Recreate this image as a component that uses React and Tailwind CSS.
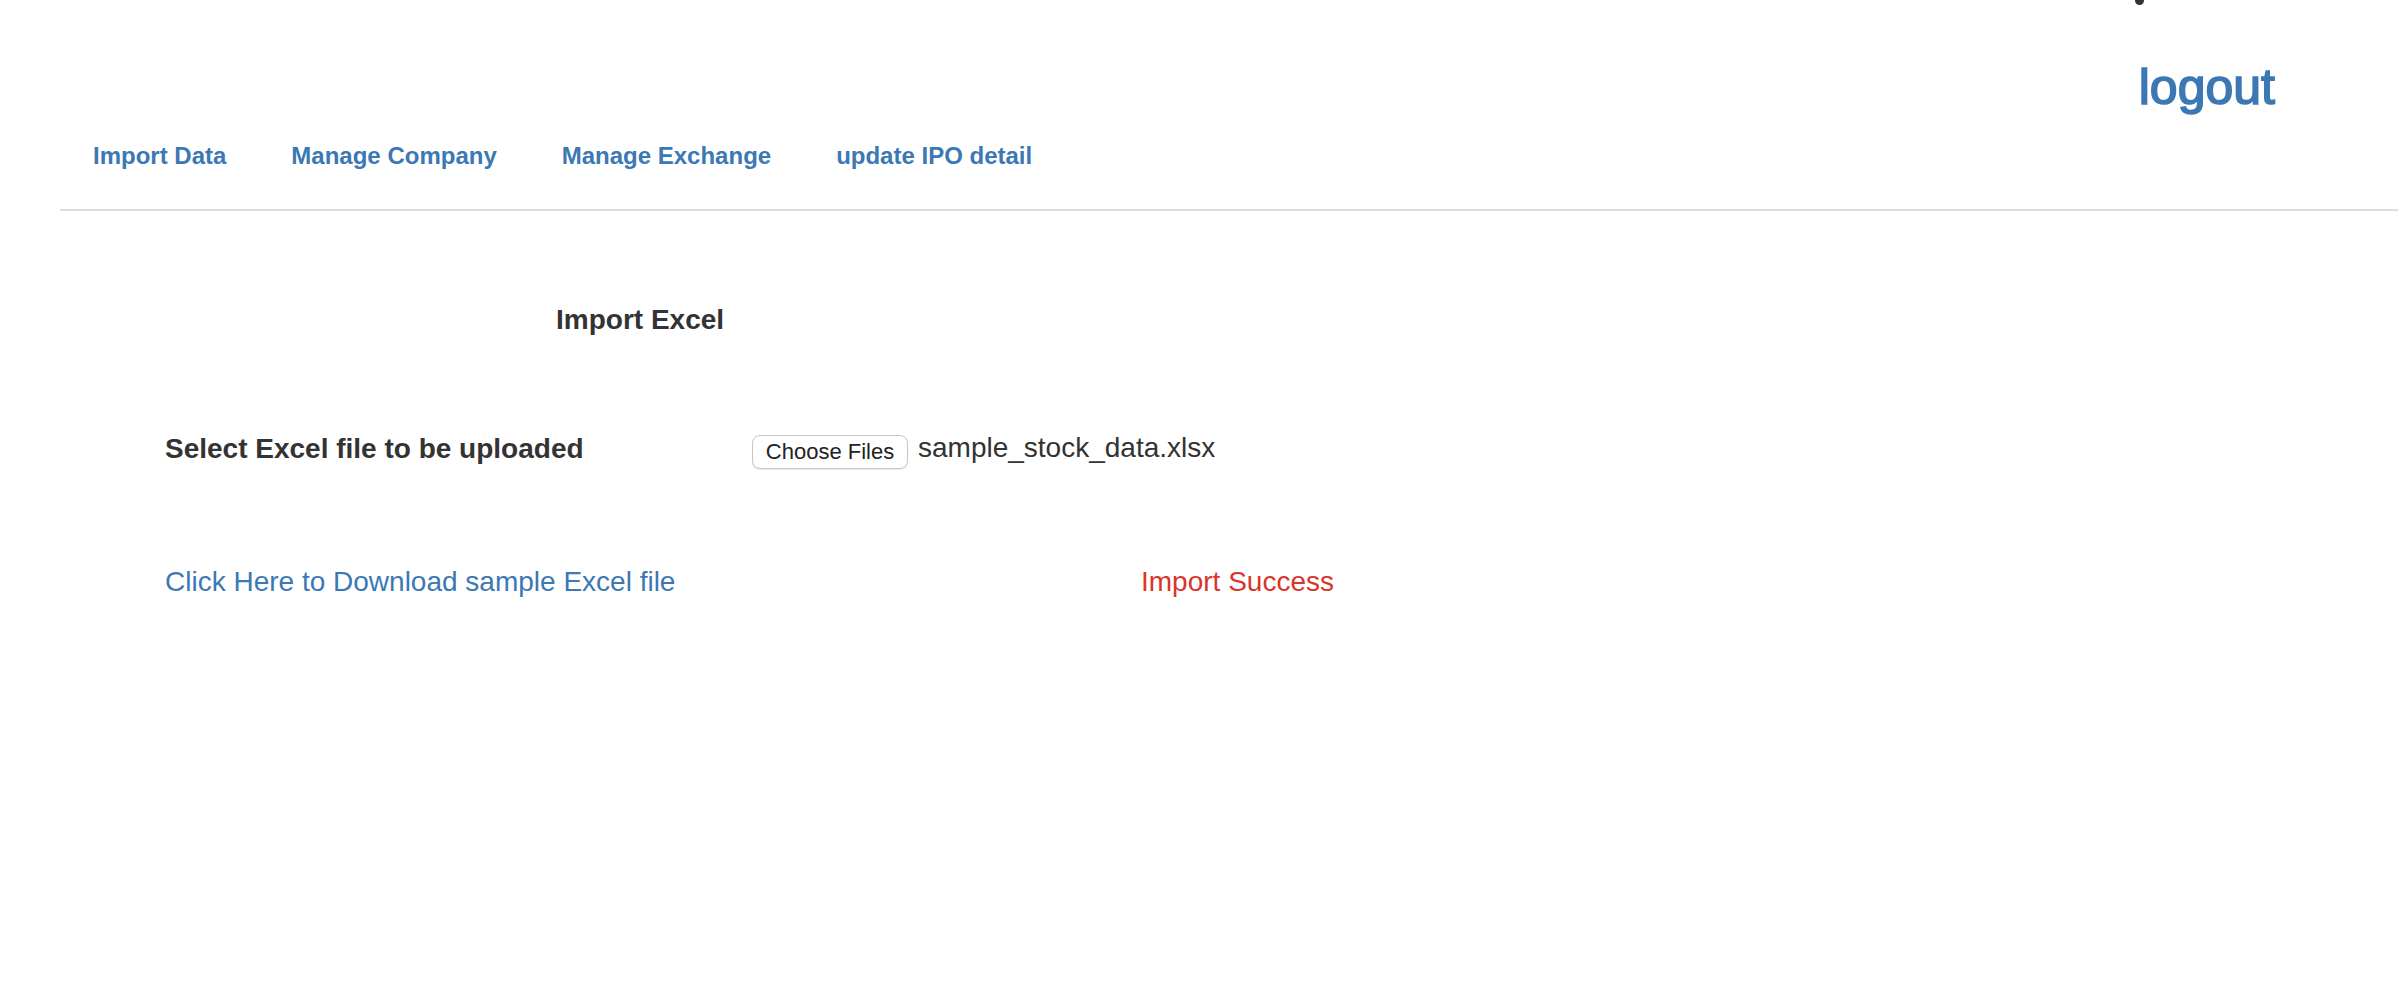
import React from 'react';

const navLinks = ['Import Data', 'Manage Company', 'Manage Exchange', 'update IPO detail'];

export default function App() {
  return (
    <div className="min-h-screen bg-white font-['Liberation_Sans',Arial,sans-serif] text-[#333]">
      {/* top bar with user + logout */}
      <header className="flex justify-end pr-[123px]">
        <div className="flex flex-col items-start">
          <span className="-ml-[4px] -mt-[4px] h-[9px] w-[9px] rounded-full bg-[#333]" />
          <a
            href="#"
            className="mt-[54px] text-[50px] leading-[56px] text-[#3b78b4] [-webkit-text-stroke:1.6px_#3b78b4]"
          >
            logout
          </a>
        </div>
      </header>

      <nav className="ml-[60px] mt-[27px] flex border-b-2 border-[#dddddd] pb-[39px]">
        {navLinks.map((link) => (
          <a
            key={link}
            href="#"
            className="pl-[33px] pr-[32px] text-[24px] font-bold leading-[28px] text-[#3b78b4]"
          >
            {link}
          </a>
        ))}
      </nav>

      <main className="pt-[93px]">
        <h3 className="ml-[556px] text-[28px] font-bold leading-[32px]">Import Excel</h3>

        <div className="mt-[97px] flex items-start">
          <label className="ml-[165px] w-[587px] text-[28px] font-bold leading-[32px]">
            Select Excel file to be uploaded
          </label>
          <button className="mt-[2px] h-[34px] w-[156px] rounded-[8px] border border-[#c6c6c6] bg-white text-[22px] leading-[32px] text-[#222] shadow-[0_1px_1px_rgba(0,0,0,0.08)]">
            Choose Files
          </button>
          <span className="ml-[10px] -mt-[1px] text-[28px] leading-[32px] text-[#333]">
            sample_stock_data.xlsx
          </span>
        </div>

        <div className="mt-[97px] flex items-start">
          <a href="#" className="ml-[165px] w-[976px] text-[28px] leading-[32px] text-[#3b78b4]">
            Click Here to Download sample Excel file
          </a>
          <span className="text-[28px] leading-[32px] text-[#d9352b]">Import Success</span>
        </div>
      </main>
    </div>
  );
}
